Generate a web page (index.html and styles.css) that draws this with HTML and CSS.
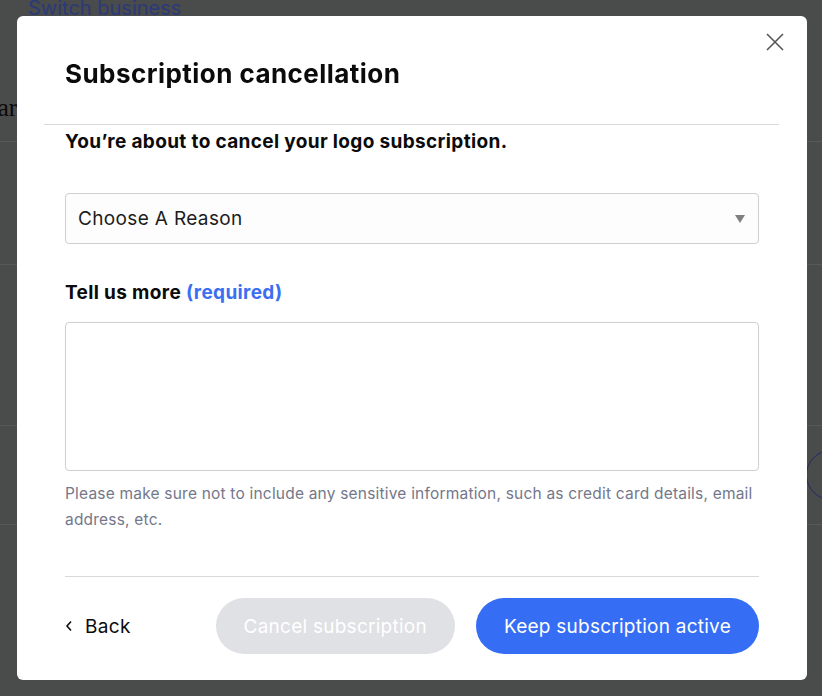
FILE: index.html
```html
<!DOCTYPE html>
<html lang="en">
  <head>
    <meta charset="UTF-8" />
    <meta name="viewport" content="width=device-width, initial-scale=1.0" />
    <title>Subscription cancellation</title>
    <link rel="stylesheet" href="styles.css">
  </head>
  <body>
    <!-- page behind the modal (already dimmed) -->
    <div class="page">
      <a href="#" class="page__switch">Switch business</a>
      <h2 class="page__heading">Yearly plan</h2>
      <div class="page__row page__row--1"></div>
      <div class="page__row page__row--2"></div>
      <div class="page__row page__row--3">
        <span class="page__pill">Manage</span>
      </div>
      <div class="page__row page__row--4"></div>
    </div>

    <div class="modal">
      <div class="modal__header">
        <h1 class="modal__title">Subscription cancellation</h1>
        <button class="modal__close" aria-label="Close">
          <svg width="18" height="18" viewBox="0 0 18 18">
            <path d="M1 1 L17 17 M17 1 L1 17" stroke="#555" stroke-width="1.6" fill="none" />
          </svg>
        </button>
      </div>
      <div class="modal__divider modal__divider--wide"></div>

      <p class="modal__lead">You’re about to cancel your logo subscription.</p>

      <div class="select">
        <span class="select__value">Choose A Reason</span>
        <span class="select__arrow"></span>
      </div>

      <label class="field__label">Tell us more <span class="field__req">(required)</span></label>
      <div class="field__textarea"></div>
      <p class="field__hint">
        Please make sure not to include any sensitive information, such as credit card details, email
        address, etc.
      </p>

      <div class="modal__divider modal__divider--footer"></div>

      <div class="modal__footer">
        <a href="#" class="back">
          <svg width="8" height="12" viewBox="0 0 8 12">
            <path d="M6 1.5 L2 6 L6 10.5" stroke="#111" stroke-width="1.6" fill="none" />
          </svg>
          Back
        </a>
        <div class="modal__actions">
          <button class="btn btn--disabled">Cancel subscription</button>
          <button class="btn btn--primary">Keep subscription active</button>
        </div>
      </div>
    </div>
  </body>
</html>
```

FILE: styles.css
```css
* {
  margin: 0;
  padding: 0;
  box-sizing: border-box;
}

body {
  background-color: #4a4b4b;
  font-family: "Inter", "Lato", sans-serif;
  overflow: hidden;
  height: 696px;
}

/* background page */
.page {
  height: 100%;
}
.page__switch {
  display: block;
  padding-left: 28px;
  margin-top: -4px;
  font-size: 20px;
  line-height: 24px;
  color: #2a3a7a;
  text-decoration: none;
}
.page__heading {
  margin: 76px 0 0 -29px;
  font-family: "Liberation Serif", serif;
  font-weight: 400;
  font-size: 25px;
  line-height: 24px;
  color: #0a0a0a;
}
.page__row {
  border-top: 1px solid #575858;
}
.page__row--1 {
  margin-top: 21px;
  height: 123px;
}
.page__row--2 {
  height: 161px;
}
.page__row--3 {
  height: 99px;
  display: flex;
  align-items: center;
  justify-content: flex-end;
}
.page__row--4 {
  height: 172px;
}
.page__pill {
  margin-right: -110px;
  padding: 0 24px;
  height: 50px;
  line-height: 48px;
  border: 1.5px solid #1f2b66;
  border-radius: 25px;
  color: #1f2b66;
  font-size: 20px;
}

/* modal */
.modal {
  position: fixed;
  top: 16px;
  left: 17px;
  width: 790px;
  background-color: #fff;
  border-radius: 6px;
  padding: 0 48px 26px;
  color: #0b0b0b;
  letter-spacing: 0.35px;
}
.modal__header {
  position: relative;
  height: 108px;
  padding-top: 40px;
}
.modal__title {
  font-size: 26px;
  font-weight: 700;
  line-height: 36px;
  letter-spacing: 0.45px;
}
.modal__close {
  position: absolute;
  top: 17px;
  right: -25px;
  border: none;
  background: none;
  cursor: pointer;
  display: flex;
}
.modal__divider {
  height: 1px;
  background-color: #d9d9dc;
}
.modal__divider--wide {
  margin: 0 -20px 0 -21px;
}
.modal__divider--footer {
  margin-top: 43px;
}
.modal__lead {
  margin-top: 4px;
  font-size: 19px;
  font-weight: 700;
  line-height: 26px;
}

.select {
  margin-top: 38px;
  height: 51px;
  display: flex;
  align-items: center;
  justify-content: space-between;
  padding: 0 13px 0 12px;
  border: 1px solid #cfcfcf;
  border-radius: 4px;
  background-color: #fdfdfd;
}
.select__value {
  font-size: 19px;
  color: #1c1c1c;
}
.select__arrow {
  width: 0;
  height: 0;
  border-left: 5px solid transparent;
  border-right: 5px solid transparent;
  border-top: 8px solid #808080;
}

.field__label {
  display: block;
  margin-top: 36px;
  font-size: 19px;
  font-weight: 700;
  line-height: 26px;
}
.field__req {
  color: #3a6ff2;
}
.field__textarea {
  margin-top: 16px;
  height: 149px;
  border: 1px solid #cfcfcf;
  border-radius: 4px;
}
.field__hint {
  margin-top: 10px;
  font-size: 15.5px;
  line-height: 26px;
  letter-spacing: 0.2px;
  color: #74778a;
}

.modal__footer {
  margin-top: 21px;
  display: flex;
  align-items: center;
  justify-content: space-between;
}
.back {
  display: flex;
  align-items: center;
  gap: 12px;
  font-size: 19px;
  color: #0b0b0b;
  text-decoration: none;
}
.modal__actions {
  display: flex;
  gap: 21px;
}
.btn {
  height: 56px;
  padding: 0 28px;
  border: none;
  border-radius: 28px;
  font-family: inherit;
  font-size: 19px;
  letter-spacing: 0.25px;
  color: #fff;
}
.btn--disabled {
  background-color: #e0e1e4;
}
.btn--primary {
  background-color: #356ef5;
  cursor: pointer;
}
```
